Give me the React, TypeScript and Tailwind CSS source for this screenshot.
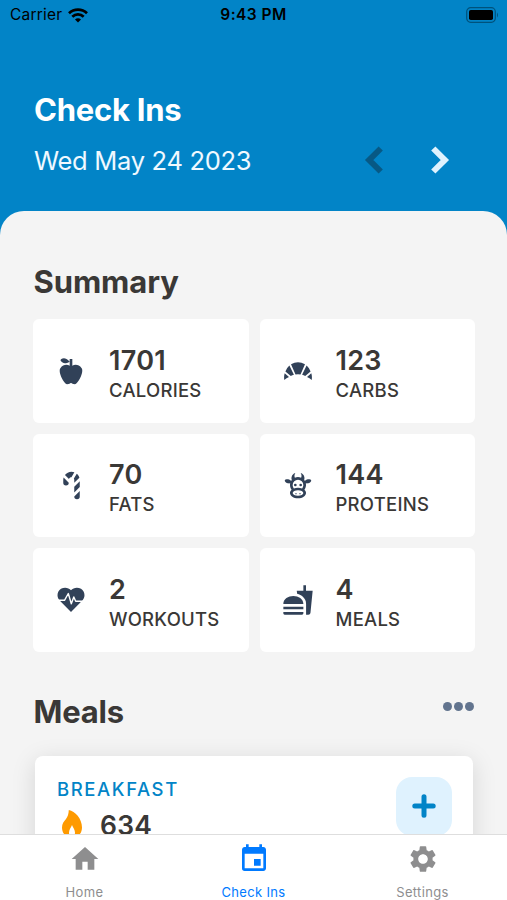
import React from 'react';
import { MdFastfood, MdHome, MdSettings, MdEvent } from 'react-icons/md';

const AppleIcon = ({ className }: { className?: string }) => (
    <svg viewBox="0 0 24 24" fill="currentColor" className={className}>
        <path d="M20,10C22,13 17,22 15,22C13,22 13,21 12,21C11,21 11,22 9,22C7,22 2,13 4,10C6,7 9,7 11,8V5C5.38,8.07 4.11,3.78 4.11,3.78C4.11,3.78 6.77,0.19 11,5V3H13V8C15,7 18,7 20,10Z" />
    </svg>
);

const CroissantIcon = ({ className }: { className?: string }) => (
    <svg viewBox="0 0 28 18" fill="currentColor" className={className}>
        <path d="M7 2.300Q14-1.700 21 2.300L16.500 12.600Q14 12 11.500 12.600Z" />
        <path d="M5.400 3.600 9.900 12.800Q8.200 13.300 6.800 14L1.400 9.400Q2.800 5.900 5.400 3.600Z" />
        <path d="M22.600 3.600 18.100 12.800Q19.800 13.300 21.200 14L26.600 9.400Q25.200 5.900 22.600 3.600Z" />
        <path d="M.7 11.300 5 15Q2.400 16.200.3 18-.3 14.400.7 11.300Z" />
        <path d="M27.300 11.300 23 15Q25.600 16.200 27.700 18 28.300 14.400 27.300 11.300Z" />
    </svg>
);

const CandyCaneIcon = ({ className }: { className?: string }) => (
    <svg viewBox="0 0 24 24" fill="currentColor" className={className}>
        <path d="M10,10A2,2 0 0,1 8,12A2,2 0 0,1 6,10V8C6,7.37 6.1,6.77 6.27,6.2L10,9.93V10M12,2C12.74,2 13.44,2.13 14.09,2.38L11.97,6C11.14,6 10.44,6.5 10.15,7.25L7.24,4.34C8.34,2.92 10.06,2 12,2M17.76,6.31L14,10.07V8C14,7.62 13.9,7.27 13.72,6.97L15.83,3.38C16.74,4.13 17.42,5.15 17.76,6.31M18,13.09L14,17.09V12.9L18,8.9V13.09M18,20A2,2 0 0,1 16,22A2,2 0 0,1 14,20V19.91L18,15.91V20Z" />
    </svg>
);

const CowIcon = ({ className }: { className?: string }) => (
    <svg viewBox="0 0 24 24" fill="currentColor" className={className}>
        <path d="M10.5,18A0.5,0.5 0 0,1 11,18.5A0.5,0.5 0 0,1 10.5,19A0.5,0.5 0 0,1 10,18.5A0.5,0.5 0 0,1 10.5,18M13.5,18A0.5,0.5 0 0,1 14,18.5A0.5,0.5 0 0,1 13.5,19A0.5,0.5 0 0,1 13,18.5A0.5,0.5 0 0,1 13.5,18M10,11A1,1 0 0,1 11,12A1,1 0 0,1 10,13A1,1 0 0,1 9,12A1,1 0 0,1 10,11M14,11A1,1 0 0,1 15,12A1,1 0 0,1 14,13A1,1 0 0,1 13,12A1,1 0 0,1 14,11M18,18C18,20.21 15.31,22 12,22C8.69,22 6,20.21 6,18C6,17.1 6.45,16.27 7.2,15.6C6.45,14.6 6,13.35 6,12L6.12,10.78C5.58,10.93 4.93,10.93 4.4,10.78C3.38,10.5 1.84,9.35 2.07,8.55C2.3,7.75 4.21,7.6 5.23,7.9C5.82,8.07 6.45,8.5 6.82,8.96L7.39,8.15C6.79,7.05 7,4 10,3L9.91,3.14C9.63,3.58 8.91,4.97 9.67,6.47C10.39,6.17 11.17,6 12,6C12.83,6 13.61,6.17 14.33,6.47C15.09,4.97 14.37,3.58 14.09,3.14L14,3C17,4 17.21,7.05 16.61,8.15L17.18,8.96C17.55,8.5 18.18,8.07 18.77,7.9C19.79,7.6 21.7,7.75 21.93,8.55C22.16,9.35 20.62,10.5 19.6,10.78C19.07,10.93 18.42,10.93 17.88,10.78L18,12C18,13.35 17.55,14.6 16.8,15.6C17.55,16.27 18,17.1 18,18M12,16C9.79,16 8,16.9 8,18C8,19.1 9.79,20 12,20C14.21,20 16,19.1 16,18C16,16.9 14.21,16 12,16M12,14C13.12,14 14.17,14.21 15.07,14.56C15.65,13.87 16,13 16,12A4,4 0 0,0 12,8A4,4 0 0,0 8,12C8,13 8.35,13.87 8.93,14.56C9.83,14.21 10.88,14 12,14Z" />
    </svg>
);

const HeartPulseIcon = ({ className }: { className?: string }) => (
    <svg viewBox="0 0 28 26" fill="none" className={className}>
        <path d="M14 25 2.4 13.2C-.8 9.6.3 4 4 1.800 7.600-.3 11.800.7 14 3.300 16.200.7 20.400-.3 24 1.800 27.700 4 28.800 9.600 25.600 13.200Z" fill="currentColor" />
        <path d="M0 13.300H7.500L11.300 6.500 14.300 16.800 16.800 10 18.700 14.300H28" stroke="white" strokeWidth="1.400" strokeLinejoin="round" />
    </svg>
);

const FlameIcon = ({ className }: { className?: string }) => (
    <svg viewBox="0 0 20 28" fill="currentColor" className={className}>
        <path d="M6.800 0C13 1.300 20 8.500 20 17.500 20 23.500 16 27.500 10 27.500S0 23.500 0 17.500C0 13.500 1.800 11.500 3.800 9.200 5.800 6.700 6.600 4 6.800 0ZM10 15C9.200 17.500 7 19.500 7 22.500A3 3.500 0 0 0 13 22.500C13 19.500 10.800 17.500 10 15Z" fillRule="evenodd" />
    </svg>
);

const Chevron = ({ className }: { className?: string }) => (
    <svg viewBox="0 0 20 30" fill="none" stroke="currentColor" className={className}>
        <path d="M3.300 3.500 14.800 15 3.300 26.500" strokeWidth="6" strokeLinejoin="miter" />
    </svg>
);

const stats = [
    { icon: <AppleIcon className="h-8 w-8" />, value: '1701', label: 'CALORIES' },
    { icon: <CroissantIcon className="h-[18px] w-7" />, value: '123', label: 'CARBS' },
    { icon: <CandyCaneIcon className="h-[33px] w-[33px] shrink-0" />, value: '70', label: 'FATS' },
    { icon: <CowIcon className="h-8 w-8" />, value: '144', label: 'PROTEINS' },
    { icon: <HeartPulseIcon className="h-[26px] w-7" />, value: '2', label: 'WORKOUTS' },
    { icon: <MdFastfood className="h-8 w-8" />, value: '4', label: 'MEALS' },
];

const StatusBar = () => (
    <div className="grid h-[30px] grid-cols-3 items-center px-[8px] text-black">
        <div className="flex items-center gap-[6px] pl-[2px]">
            <span className="text-[15.5px] tracking-[0.2px]">Carrier</span>
            <svg viewBox="0 0 20 15" fill="none" stroke="currentColor" strokeWidth="2.700" className="h-[15px] w-5">
                <path d="M1 5.200C6 .3 14 .3 19 5.200M4.300 8.700C7.500 5.600 12.500 5.600 15.700 8.700" />
                <path d="M10 14.500 7 11.500C8.700 9.900 11.300 9.900 13 11.500Z" fill="currentColor" stroke="none" />
            </svg>
        </div>
        <span className="text-center text-[15.5px] font-semibold tracking-[0.45px]">9:43 PM</span>
        <svg viewBox="0 0 33 16" className="h-4 w-[33px] justify-self-end">
            <rect x=".7" y=".7" width="28.6" height="14.6" rx="4" fill="none" stroke="#00527c" strokeWidth="1.200" />
            <rect x="3" y="3" width="24" height="10" rx="1.800" />
            <path d="M31 5.500Q33 8 31 10.500Z" fill="#00527c" />
        </svg>
    </div>
);

const App = () => {
    return (
        <div className="flex h-[900px] w-[507px] flex-col overflow-hidden bg-[#0284c7] font-['Inter','Liberation_Sans',sans-serif]">
            <StatusBar />

            <header className="flex h-[181px] shrink-0 items-end justify-between pb-[33px] pl-[34px] pr-[57px]">
                <div>
                    <h1 className="text-[31px] font-bold leading-[40px] tracking-[-0.25px] text-white">Check Ins</h1>
                    <p className="mt-[14px] text-[25.5px] leading-[34px] tracking-[-0.3px] text-sky-50">Wed May 24 2023</p>
                </div>
                <div className="flex gap-[46px] pb-[3px]">
                    <Chevron className="h-[30px] w-5 rotate-180 text-[#075985]" />
                    <Chevron className="h-[30px] w-5 text-sky-100" />
                </div>
            </header>

            <main className="min-h-0 flex-1 overflow-hidden rounded-t-[24px] bg-[#f4f4f4] pl-[33px] pr-[32px] pt-[51px] text-[#3a3836]">
                <h2 className="pl-[0.5px] text-[31px] font-bold leading-[40px] tracking-[-0.1px]">Summary</h2>
                <div className="mt-[17px] grid grid-cols-2 gap-[11px]">
                    {stats.map((stat) => (
                        <div key={stat.label} className="flex h-[103.5px] items-center rounded-md bg-white pl-[22px]">
                            <div className="flex w-8 justify-center text-slate-700">{stat.icon}</div>
                            <div className="ml-[22px] pt-[5px]">
                                <p className="text-[27px] font-semibold leading-[34px] tracking-[0.3px]">{stat.value}</p>
                                <p className="text-[18.5px] font-medium leading-[25px] tracking-[0.25px]">{stat.label}</p>
                            </div>
                        </div>
                    ))}
                </div>

                <div className="mt-[40px] flex items-center justify-between">
                    <h2 className="pl-[0.5px] text-[31px] font-bold leading-[40px] tracking-[-0.2px]">Meals</h2>
                    <div className="flex gap-[2px] pb-[11px] pr-[1px]">
                        <span className="h-[9px] w-[9px] rounded-full bg-slate-500" />
                        <span className="h-[9px] w-[9px] rounded-full bg-slate-500" />
                        <span className="h-[9px] w-[9px] rounded-full bg-slate-500" />
                    </div>
                </div>

                <div className="mx-[2px] mt-[24px] flex h-[160px] items-start justify-between rounded-lg bg-white pl-[22px] pr-[21px] pt-[21px] shadow-[0_5px_24px_rgba(0,0,0,0.13)]">
                    <div>
                        <p className="text-[18.5px] font-medium leading-[25px] tracking-[1.6px] text-[#0284c7]">BREAKFAST</p>
                        <div className="mt-[6px] flex items-start">
                            <FlameIcon className="ml-[5px] mt-[2px] h-7 w-5 text-amber-500" />
                            <span className="ml-[18px] text-[26.5px] font-semibold leading-[34px] tracking-[0.2px]">634</span>
                        </div>
                    </div>
                    <button className="flex h-[59px] w-[56px] items-center justify-center rounded-[16px] bg-sky-100 text-[#0284c7]">
                        <svg viewBox="0 0 24 24" stroke="currentColor" strokeWidth="5" strokeLinecap="round" className="h-6 w-6">
                            <path d="M12 2.800V21.200M2.800 12H21.200" />
                        </svg>
                    </button>
                </div>
            </main>

            <nav className="z-10 grid h-[66px] shrink-0 grid-cols-3 border-t border-[#dedede] bg-white text-[13px] tracking-[0.35px] text-[#8e8e8f]">
                <div className="flex flex-col items-center pt-[8px]">
                    <MdHome className="h-8 w-8" />
                    <span className="mt-[7px] leading-[20px]">Home</span>
                </div>
                <div className="flex flex-col items-center pt-[8px] text-[#007aff]">
                    <MdEvent className="h-8 w-8" />
                    <span className="mt-[7px] leading-[20px]">Check Ins</span>
                </div>
                <div className="flex flex-col items-center pt-[8px]">
                    <MdSettings className="h-8 w-8" />
                    <span className="mt-[7px] leading-[20px]">Settings</span>
                </div>
            </nav>
        </div>
    );
};

export default App;
